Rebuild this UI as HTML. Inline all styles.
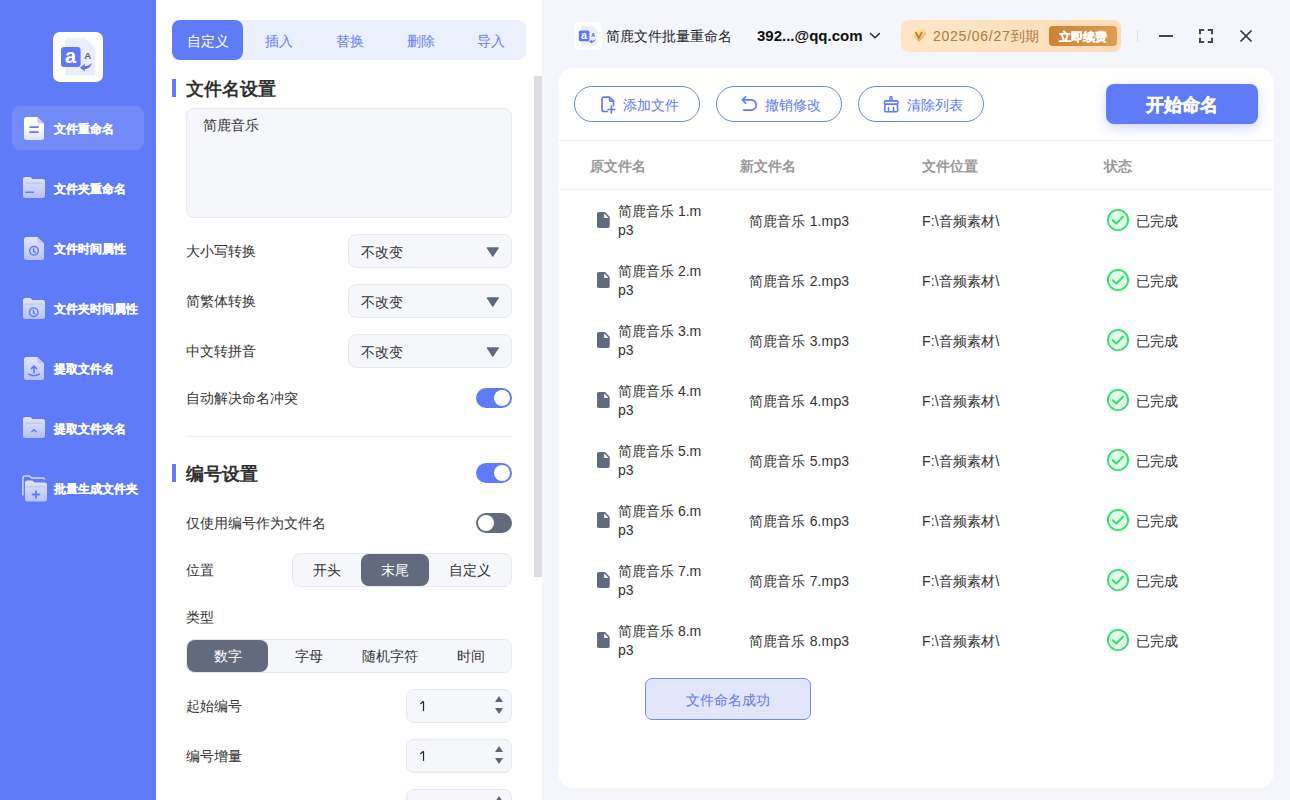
<!DOCTYPE html>
<html><head><meta charset="utf-8">
<style>
*{box-sizing:border-box;margin:0;padding:0}
html,body{width:1290px;height:800px;overflow:hidden}
body{position:relative;background:#f5f6fa;font-family:"Liberation Sans",sans-serif;color:#333;font-size:14px}
.a{position:absolute}
.t{position:absolute;white-space:nowrap;line-height:20px}
#side{left:0;top:0;width:156px;height:800px;background:#607bf8}
#panel{left:156px;top:0;width:386px;height:800px;background:#fff;overflow:hidden}
#right{left:542px;top:0;width:748px;height:800px;background:#f5f6fb}
.nav{position:absolute;left:12px;width:132px;height:44px;border-radius:8px}
.nav.on{background:rgba(255,255,255,.12)}
.nav .t{left:42px;top:12.5px;color:#fff;font-weight:bold;font-size:12px;-webkit-text-stroke:.2px #fff}
.nav svg{position:absolute;left:10px;top:9px}
.lbl{position:absolute;left:30px;white-space:nowrap;line-height:20px;font-size:14px;color:#333}
.sel{position:absolute;left:192px;width:164px;height:34px;background:#f6f7fb;border:1px solid #e8e9ef;border-radius:8px}
.sel .t{left:12px;top:7px;color:#333}
.sel .arr{position:absolute;left:138px;top:13px;width:0;height:0;border-left:6.5px solid transparent;border-right:6.5px solid transparent;border-top:10px solid #5f6474}
.tog{position:absolute;left:320px;width:36px;height:20px;border-radius:10px;background:#607bf8}
.tog::after{content:"";position:absolute;left:18px;top:2px;width:16px;height:16px;border-radius:50%;background:#fff}
.tog.off{background:#626a7d}
.tog.off::after{left:2px}
.hbar{position:absolute;left:16px;width:4px;height:18px;background:#607bf8}
.htxt{position:absolute;left:30px;white-space:nowrap;font-size:18px;font-weight:bold;color:#303030;line-height:24px}
.seg{position:absolute;height:34px;background:#f6f7fb;border:1px solid #e8e9ef;border-radius:8px;display:flex;padding:0}
.seg div{height:32px;line-height:32px;text-align:center;font-size:14px;color:#333;border-radius:8px;white-space:nowrap}
.seg div.on{background:#626a7d;color:#fff}
.num{position:absolute;left:250px;width:106px;height:34px;background:#f6f7fb;border:1px solid #e8e9ef;border-radius:8px}
.num .t{left:13px;top:6px;color:#333}
.num .up{position:absolute;left:88px;top:6px;width:0;height:0;border-left:4.5px solid transparent;border-right:4.5px solid transparent;border-bottom:6px solid #5f6474}
.num .dn{position:absolute;left:88px;top:18px;width:0;height:0;border-left:4.5px solid transparent;border-right:4.5px solid transparent;border-top:6px solid #5f6474}
.btn{position:absolute;top:18px;width:126px;height:36px;border:1px solid #6a80f7;border-radius:18px;background:#fff}
.btn .t{left:48px;top:8px;color:#6279f7}
.btn svg{position:absolute;left:25px;top:9px}
.hd{position:absolute;top:156px;font-weight:bold;color:#999;line-height:20px;white-space:nowrap}
.row{position:absolute;left:0;width:716px;height:60px}
.row .ic{position:absolute;left:39px;top:22px}
.row .n1{position:absolute;left:60px;top:12px;width:90px;line-height:19px;color:#333;white-space:normal;word-break:break-all}
.row .n2{position:absolute;left:191px;top:21px;color:#333;white-space:nowrap;line-height:20px;letter-spacing:.15px}
.row .loc{position:absolute;left:364px;top:21px;color:#333;white-space:nowrap;line-height:20px;letter-spacing:.15px}
.row .ck{position:absolute;left:549px;top:19px}
.row .st{position:absolute;left:578px;top:21px;color:#333;white-space:nowrap;line-height:20px}
</style></head><body>

<div id="side" class="a"><svg width="0" height="0" style="position:absolute"><defs><linearGradient id="gA" x1="0" y1="0" x2="0" y2="1"><stop offset="0" stop-color="#ffffff"/><stop offset="0.45" stop-color="#ffffff"/><stop offset="1" stop-color="#dbe1fd"/></linearGradient><linearGradient id="gI" x1="0" y1="0" x2="0" y2="1"><stop offset="0" stop-color="#e1e6fe"/><stop offset="1" stop-color="#b6c1fb"/></linearGradient></defs></svg>
  <div class="a" style="left:53px;top:32px;width:50px;height:50px;background:#fff;border-radius:7px"><svg width="50" height="50" viewBox="0 0 50 50"><path d="M14.6 6.3H31.9L42.3 16.1V40.9A2.5 2.5 0 0 1 39.8 43.4H14.6A2.5 2.5 0 0 1 12.1 40.9V8.8A2.5 2.5 0 0 1 14.6 6.3Z" fill="#e9effe"/><rect x="8" y="14.9" width="19.6" height="20.2" rx="3" fill="#6077f7"/><text x="17.6" y="30.6" text-anchor="middle" font-family="Liberation Sans" font-weight="bold" font-size="20" fill="#fff">a</text><text x="34.6" y="27" text-anchor="middle" font-family="Liberation Sans" font-weight="bold" font-size="9.6" fill="#5b6270">A</text><path d="M27 35.7L31.9 31.6L31.7 34.1C34.7 34.1 37.1 33.1 38.9 30.7C38.4 34.5 35.5 36.8 31.7 37.1L31.9 39.6Z" fill="#6077f7"/></svg></div>
  <div class="nav on" style="top:106px"><svg width="27" height="27" viewBox="0 0 27 27"><path d="M4.5 2H15.3L22 8.5V22.5A2.5 2.5 0 0 1 19.5 25H4.5A2.5 2.5 0 0 1 2 22.5V4.5A2.5 2.5 0 0 1 4.5 2Z" fill="url(#gA)"/><path d="M15.3 2V6.3A2.2 2.2 0 0 0 17.5 8.5H22Z" fill="#c3cbfb"/><rect x="7.2" y="11.2" width="9.8" height="1.8" rx=".9" fill="#607bf8"/><rect x="7.2" y="16.2" width="9.8" height="1.8" rx=".9" fill="#607bf8"/></svg><div class="t">文件重命名</div></div>
  <div class="nav" style="top:166px"><svg width="27" height="27" viewBox="0 0 27 27"><g transform="translate(0 0)"><path d="M3.5 2H8.3L10.6 4H20.5A2.5 2.5 0 0 1 23 6.5V20.5A2.5 2.5 0 0 1 20.5 23H3.5A2.5 2.5 0 0 1 1 20.5V4.5A2.5 2.5 0 0 1 3.5 2Z" fill="url(#gI)"/><path d="M4.5 7.3H19.5A1.5 1.5 0 0 1 21 8.8V9H3V8.8A1.5 1.5 0 0 1 4.5 7.3Z" fill="#bcc6fc" opacity=".8"/></g><rect x="3" y="16.5" width="9" height="1.6" rx=".8" fill="#607bf8"/></svg><div class="t">文件夹重命名</div></div>
  <div class="nav" style="top:226px"><svg width="27" height="27" viewBox="0 0 27 27"><path d="M4.5 2H15.3L22 8.5V22.5A2.5 2.5 0 0 1 19.5 25H4.5A2.5 2.5 0 0 1 2 22.5V4.5A2.5 2.5 0 0 1 4.5 2Z" fill="url(#gI)"/><path d="M15.3 2V6.3A2.2 2.2 0 0 0 17.5 8.5H22Z" fill="#c3cbfb"/><circle cx="12" cy="15.8" r="4.3" fill="none" stroke="#607bf8" stroke-width="1.4"/><path d="M11.6 13.6V16.2L13.4 17.6" fill="none" stroke="#607bf8" stroke-width="1.3" stroke-linecap="round"/></svg><div class="t">文件时间属性</div></div>
  <div class="nav" style="top:286px"><svg width="27" height="27" viewBox="0 0 27 27"><g transform="translate(0 1)"><path d="M3.5 2H8.3L10.6 4H20.5A2.5 2.5 0 0 1 23 6.5V20.5A2.5 2.5 0 0 1 20.5 23H3.5A2.5 2.5 0 0 1 1 20.5V4.5A2.5 2.5 0 0 1 3.5 2Z" fill="url(#gI)"/><path d="M4.5 7.3H19.5A1.5 1.5 0 0 1 21 8.8V9H3V8.8A1.5 1.5 0 0 1 4.5 7.3Z" fill="#bcc6fc" opacity=".8"/></g><circle cx="11.75" cy="17.2" r="4.3" fill="none" stroke="#607bf8" stroke-width="1.4"/><path d="M11.4 15V17.6L13.1 19" fill="none" stroke="#607bf8" stroke-width="1.3" stroke-linecap="round"/></svg><div class="t">文件夹时间属性</div></div>
  <div class="nav" style="top:346px"><svg width="27" height="27" viewBox="0 0 27 27"><path d="M4.5 2H15.3L22 8.5V22.5A2.5 2.5 0 0 1 19.5 25H4.5A2.5 2.5 0 0 1 2 22.5V4.5A2.5 2.5 0 0 1 4.5 2Z" fill="url(#gI)"/><path d="M15.3 2V6.3A2.2 2.2 0 0 0 17.5 8.5H22Z" fill="#c3cbfb"/><path d="M12 18V11.2M9.4 13.6L12 11L14.6 13.6" fill="none" stroke="#607bf8" stroke-width="1.5" stroke-linecap="round" stroke-linejoin="round"/><path d="M6.5 19.2Q12 22.4 17.5 19.2" fill="none" stroke="#607bf8" stroke-width="1.5" stroke-linecap="round"/></svg><div class="t">提取文件名</div></div>
  <div class="nav" style="top:406px"><svg width="27" height="27" viewBox="0 0 27 27"><g transform="translate(0 0)"><path d="M3.5 2H8.3L10.6 4H20.5A2.5 2.5 0 0 1 23 6.5V20.5A2.5 2.5 0 0 1 20.5 23H3.5A2.5 2.5 0 0 1 1 20.5V4.5A2.5 2.5 0 0 1 3.5 2Z" fill="url(#gI)"/><path d="M4.5 7.3H19.5A1.5 1.5 0 0 1 21 8.8V9H3V8.8A1.5 1.5 0 0 1 4.5 7.3Z" fill="#bcc6fc" opacity=".8"/></g><path d="M9.8 16.8L12 14.8L14.2 16.8" fill="none" stroke="#607bf8" stroke-width="1.5" stroke-linecap="round" stroke-linejoin="round"/></svg><div class="t">提取文件夹名</div></div>
  <div class="nav" style="top:466px"><svg width="27" height="27" viewBox="0 0 27 27"><path d="M2.7 1H7.5L9.8 3H20.9A1.6 1.6 0 0 1 22.5 4.6" fill="none" stroke="#d5dbfd" stroke-width="1.4"/><path d="M2.7 1A2 2 0 0 0 0.9 3V20.5" fill="none" stroke="#d5dbfd" stroke-width="1.4"/><g transform="translate(2 3.5)"><g transform="translate(0 0)"><path d="M3.5 2H8.3L10.6 4H20.5A2.5 2.5 0 0 1 23 6.5V20.5A2.5 2.5 0 0 1 20.5 23H3.5A2.5 2.5 0 0 1 1 20.5V4.5A2.5 2.5 0 0 1 3.5 2Z" fill="url(#gI)"/><path d="M4.5 7.3H19.5A1.5 1.5 0 0 1 21 8.8V9H3V8.8A1.5 1.5 0 0 1 4.5 7.3Z" fill="#bcc6fc" opacity=".8"/></g></g><path d="M13.9 16.2V22.8M10.6 19.5H17.2" stroke="#607bf8" stroke-width="1.8" stroke-linecap="round"/></svg><div class="t">批量生成文件夹</div></div>
</div>

<div id="panel" class="a">
  <div class="a" style="left:16px;top:20px;width:354px;height:40px;background:#ebf0fe;border-radius:8px"></div>
  <div class="a" style="left:16px;top:20px;width:71px;height:40px;background:#607bf8;border-radius:8px"></div>
  <div class="t" style="left:16px;top:31px;width:71px;text-align:center;color:#fff">自定义</div>
  <div class="t" style="left:87px;top:31px;width:71px;text-align:center;color:#6a7ff5">插入</div>
  <div class="t" style="left:158px;top:31px;width:71px;text-align:center;color:#6a7ff5">替换</div>
  <div class="t" style="left:229px;top:31px;width:71px;text-align:center;color:#6a7ff5">删除</div>
  <div class="t" style="left:299px;top:31px;width:71px;text-align:center;color:#6a7ff5">导入</div>

  <div class="hbar" style="top:79px"></div>
  <div class="htxt" style="top:77px">文件名设置</div>
  <div class="a" style="left:30px;top:108px;width:326px;height:110px;background:#f6f7fb;border:1px solid #e8e9ef;border-radius:8px"></div>
  <div class="t" style="left:47px;top:115px">简鹿音乐</div>

  <div class="lbl" style="top:241px">大小写转换</div>
  <div class="sel" style="top:234px"><div class="t">不改变</div><svg class="a" style="left:137px;top:12px" width="14" height="11" viewBox="0 0 14 11"><path d="M1.4 0.2H12.2Q13.2 0.3 12.7 1.2L7.3 9.4Q6.75 10.2 6.2 9.4L0.9 1.2Q0.4 0.3 1.4 0.2Z" fill="#616a7d"/></svg></div>
  <div class="lbl" style="top:291px">简繁体转换</div>
  <div class="sel" style="top:284px"><div class="t">不改变</div><svg class="a" style="left:137px;top:12px" width="14" height="11" viewBox="0 0 14 11"><path d="M1.4 0.2H12.2Q13.2 0.3 12.7 1.2L7.3 9.4Q6.75 10.2 6.2 9.4L0.9 1.2Q0.4 0.3 1.4 0.2Z" fill="#616a7d"/></svg></div>
  <div class="lbl" style="top:341px">中文转拼音</div>
  <div class="sel" style="top:334px"><div class="t">不改变</div><svg class="a" style="left:137px;top:12px" width="14" height="11" viewBox="0 0 14 11"><path d="M1.4 0.2H12.2Q13.2 0.3 12.7 1.2L7.3 9.4Q6.75 10.2 6.2 9.4L0.9 1.2Q0.4 0.3 1.4 0.2Z" fill="#616a7d"/></svg></div>
  <div class="lbl" style="top:388px">自动解决命名冲突</div>
  <div class="tog" style="top:388px"></div>
  <div class="a" style="left:30px;top:436px;width:326px;height:1px;background:#eceef3"></div>

  <div class="hbar" style="top:464px"></div>
  <div class="htxt" style="top:462px">编号设置</div>
  <div class="tog" style="top:463px"></div>
  <div class="lbl" style="top:513px">仅使用编号作为文件名</div>
  <div class="tog off" style="top:513px"></div>
  <div class="lbl" style="top:560px">位置</div>
  <div class="seg" style="left:136px;top:553px;width:220px">
    <div style="width:68px">开头</div><div class="on" style="width:68px">末尾</div><div style="width:82px">自定义</div>
  </div>
  <div class="lbl" style="top:607px">类型</div>
  <div class="seg" style="left:30px;top:639px;width:326px">
    <div class="on" style="width:81px">数字</div><div style="width:81px">字母</div><div style="width:81px">随机字符</div><div style="width:81px">时间</div>
  </div>
  <div class="lbl" style="top:696px">起始编号</div>
  <div class="num" style="top:689px"><svg class="a" style="left:12px;top:10px" width="8" height="13" viewBox="0 0 8 13"><path d="M4.5 1.2V11M4.5 1.2L1.3 3.9" fill="none" stroke="#2a2a2a" stroke-width="1.25"/></svg><div class="up"></div><div class="dn"></div></div>
  <div class="lbl" style="top:746px">编号增量</div>
  <div class="num" style="top:739px"><svg class="a" style="left:12px;top:10px" width="8" height="13" viewBox="0 0 8 13"><path d="M4.5 1.2V11M4.5 1.2L1.3 3.9" fill="none" stroke="#2a2a2a" stroke-width="1.25"/></svg><div class="up"></div><div class="dn"></div></div>
  <div class="num" style="top:789px"><div class="up"></div></div>

  <div class="a" style="left:378px;top:76px;width:8px;height:501px;background:#dcdde5"></div>
</div>

<div id="right" class="a">
  <div class="a" style="left:32px;top:22px;width:28px;height:28px;background:#fff;border-radius:5px"><svg width="28" height="28" viewBox="0 0 28 28"><g transform="translate(0.5 0.4) scale(0.54)"><path d="M14.6 6.3H31.9L42.3 16.1V40.9A2.5 2.5 0 0 1 39.8 43.4H14.6A2.5 2.5 0 0 1 12.1 40.9V8.8A2.5 2.5 0 0 1 14.6 6.3Z" fill="#e9effe"/><rect x="8" y="14.9" width="19.6" height="20.2" rx="3" fill="#6077f7"/><text x="17.6" y="30.6" text-anchor="middle" font-family="Liberation Sans" font-weight="bold" font-size="20" fill="#fff">a</text><text x="34.6" y="27" text-anchor="middle" font-family="Liberation Sans" font-weight="bold" font-size="9.6" fill="#5b6270">A</text><path d="M27 35.7L31.9 31.6L31.7 34.1C34.7 34.1 37.1 33.1 38.9 30.7C38.4 34.5 35.5 36.8 31.7 37.1L31.9 39.6Z" fill="#6077f7"/></g></svg></div>
  <div class="t" style="left:64px;top:26px;color:#1f1f1f">简鹿文件批量重命名</div>
  <div class="t" style="left:215px;top:26px;color:#111;font-weight:bold;font-size:15px">392...@qq.com</div>
  <div class="a" style="left:359px;top:20px;width:220px;height:32px;border-radius:8px;background:linear-gradient(90deg,#fde6c8,#fddcb6)"></div>
  <div class="t" style="left:391px;top:26px;color:#a97a40;letter-spacing:.75px">2025/06/27到期</div>
  <div class="a" style="left:507px;top:26px;width:68px;height:20px;border-radius:4px;background:linear-gradient(90deg,#cc8333,#de9c55)"></div>
  <div class="t" style="left:507px;top:27px;width:68px;text-align:center;color:#fff;font-weight:bold;font-size:12px;-webkit-text-stroke:.3px #fff">立即续费</div>
  <div class="a" style="left:595px;top:30px;width:1px;height:12px;background:#dcdde3"></div>
  <div class="a" style="left:617px;top:35px;width:14px;height:2px;background:#444"></div><svg class="a" style="left:326px;top:31px" width="12" height="9" viewBox="0 0 12 9"><path d="M2.5 2.5L7 6.8L11.5 2.5" fill="none" stroke="#2a2a2a" stroke-width="1.5" stroke-linecap="round" stroke-linejoin="round"/></svg><svg class="a" style="left:367px;top:27px" width="18" height="17" viewBox="0 0 18 17"><defs><linearGradient id="dg" x1="0" y1="0" x2="0.6" y2="1"><stop offset="0" stop-color="#fff6d8"/><stop offset=".5" stop-color="#fbd88e"/><stop offset="1" stop-color="#f4a73f"/></linearGradient></defs><path d="M4.5 1.3H14.9L17.3 6.7L10 15L1.7 6.7Z" fill="url(#dg)"/><path d="M6.8 5.5L9.8 11L12.6 5.5" fill="none" stroke="#b57a35" stroke-width="1.6" stroke-linecap="round"/></svg><svg class="a" style="left:657px;top:29px" width="14" height="14" viewBox="0 0 14 14"><path d="M1 5.2V1H5.2M8.8 1H13V5.2M13 8.8V13H8.8M5.2 13H1V8.8" fill="none" stroke="#474747" stroke-width="2"/></svg><svg class="a" style="left:697px;top:29px" width="14" height="14" viewBox="0 0 14 14"><path d="M1.5 1.5L12.5 12.5M12.5 1.5L1.5 12.5" stroke="#333" stroke-width="1.7"/></svg>

  <div class="a" style="left:16px;top:68px;width:716px;height:720px;background:#fff;border-radius:16px">
    <div class="btn" style="left:16px"><svg style="left:23px;top:6px" width="20" height="22" viewBox="0 0 20 22"><path d="M9.3 18.5H6A2 2 0 0 1 4 16.5V6.2A2 2 0 0 1 6 4.2H11.5L15.5 8.2V12.6" fill="none" stroke="#6279f7" stroke-width="1.7" stroke-linejoin="round" stroke-linecap="round"/><path d="M11.5 4.4V7A1.2 1.2 0 0 0 12.7 8.2H15.3" fill="none" stroke="#6279f7" stroke-width="1.5"/><path d="M13.4 13.2V19.8M10.1 16.5H16.7" stroke="#6279f7" stroke-width="1.7" stroke-linecap="round"/></svg><div class="t">添加文件</div></div>
    <div class="btn" style="left:158px"><svg style="left:21px;top:6px" width="22" height="22" viewBox="0 0 22 22"><path d="M7.6 3.8L4.3 6.9L7.6 10.2M4.5 6.9H13.1A5.15 5.15 0 0 1 13.1 17.2H5.8" fill="none" stroke="#6279f7" stroke-width="1.7" stroke-linecap="round" stroke-linejoin="round"/></svg><div class="t">撤销修改</div></div>
    <div class="btn" style="left:300px"><svg style="left:21px;top:6px" width="22" height="22" viewBox="0 0 22 22"><path d="M10 7.1V4.6A1 1 0 0 1 11 3.6A1 1 0 0 1 12 4.6V7.1" fill="none" stroke="#6279f7" stroke-width="1.5"/><rect x="4.4" y="7.9" width="13.6" height="3.2" rx="1.4" fill="none" stroke="#6279f7" stroke-width="1.6"/><path d="M5 11.2L4.7 17.2A1.6 1.6 0 0 0 6.3 18.8H16.1A1.6 1.6 0 0 0 17.7 17.2L17.4 11.2" fill="none" stroke="#6279f7" stroke-width="1.6"/><path d="M8.5 14.4V18.6M13.6 14.4V18.6" stroke="#6279f7" stroke-width="1.5" stroke-linecap="round"/></svg><div class="t">清除列表</div></div>
    <div class="a" style="left:548px;top:16px;width:152px;height:40px;border-radius:8px;background:#607bf8;box-shadow:0 4px 12px rgba(96,123,248,.3)"></div>
    <div class="t" style="left:548px;top:27px;width:152px;text-align:center;color:#fff;font-weight:bold;font-size:18px;-webkit-text-stroke:.4px #fff">开始命名</div>
    <div class="a" style="left:0;top:72px;width:716px;height:1px;background:#f0f1f4"></div>
    <div class="hd" style="left:32px;top:88px">原文件名</div>
    <div class="hd" style="left:182px;top:88px">新文件名</div>
    <div class="hd" style="left:364px;top:88px">文件位置</div>
    <div class="hd" style="left:546px;top:88px">状态</div>
    <div class="a" style="left:0;top:121px;width:716px;height:1px;background:#f0f1f4"></div>
    <div id="rows"><div class="row" style="top:122px"><svg class="ic" width="13" height="16" viewBox="0 0 13 16"><path d="M1.8 0H8L12.7 4.8V14.2A1.8 1.8 0 0 1 10.9 16H1.8A1.8 1.8 0 0 1 0 14.2V1.8A1.8 1.8 0 0 1 1.8 0Z" fill="#626a7e"/><path d="M7.2 1.4V6H11.6Z" fill="#fff"/></svg><div class="n1">简鹿音乐 1.mp3</div><div class="n2">简鹿音乐 1.mp3</div><div class="loc">F:\音频素材\</div><svg class="ck" width="22" height="22" viewBox="0 0 22 22"><circle cx="11" cy="11" r="10.1" fill="#e2fbe8" stroke="#2fe06c" stroke-width="1.8"/><path d="M5.8 11.2L9.3 14.6L16 7.8" fill="none" stroke="#2fe06c" stroke-width="2" stroke-linecap="round" stroke-linejoin="round"/></svg><div class="st">已完成</div></div>
<div class="row" style="top:182px"><svg class="ic" width="13" height="16" viewBox="0 0 13 16"><path d="M1.8 0H8L12.7 4.8V14.2A1.8 1.8 0 0 1 10.9 16H1.8A1.8 1.8 0 0 1 0 14.2V1.8A1.8 1.8 0 0 1 1.8 0Z" fill="#626a7e"/><path d="M7.2 1.4V6H11.6Z" fill="#fff"/></svg><div class="n1">简鹿音乐 2.mp3</div><div class="n2">简鹿音乐 2.mp3</div><div class="loc">F:\音频素材\</div><svg class="ck" width="22" height="22" viewBox="0 0 22 22"><circle cx="11" cy="11" r="10.1" fill="#e2fbe8" stroke="#2fe06c" stroke-width="1.8"/><path d="M5.8 11.2L9.3 14.6L16 7.8" fill="none" stroke="#2fe06c" stroke-width="2" stroke-linecap="round" stroke-linejoin="round"/></svg><div class="st">已完成</div></div>
<div class="row" style="top:242px"><svg class="ic" width="13" height="16" viewBox="0 0 13 16"><path d="M1.8 0H8L12.7 4.8V14.2A1.8 1.8 0 0 1 10.9 16H1.8A1.8 1.8 0 0 1 0 14.2V1.8A1.8 1.8 0 0 1 1.8 0Z" fill="#626a7e"/><path d="M7.2 1.4V6H11.6Z" fill="#fff"/></svg><div class="n1">简鹿音乐 3.mp3</div><div class="n2">简鹿音乐 3.mp3</div><div class="loc">F:\音频素材\</div><svg class="ck" width="22" height="22" viewBox="0 0 22 22"><circle cx="11" cy="11" r="10.1" fill="#e2fbe8" stroke="#2fe06c" stroke-width="1.8"/><path d="M5.8 11.2L9.3 14.6L16 7.8" fill="none" stroke="#2fe06c" stroke-width="2" stroke-linecap="round" stroke-linejoin="round"/></svg><div class="st">已完成</div></div>
<div class="row" style="top:302px"><svg class="ic" width="13" height="16" viewBox="0 0 13 16"><path d="M1.8 0H8L12.7 4.8V14.2A1.8 1.8 0 0 1 10.9 16H1.8A1.8 1.8 0 0 1 0 14.2V1.8A1.8 1.8 0 0 1 1.8 0Z" fill="#626a7e"/><path d="M7.2 1.4V6H11.6Z" fill="#fff"/></svg><div class="n1">简鹿音乐 4.mp3</div><div class="n2">简鹿音乐 4.mp3</div><div class="loc">F:\音频素材\</div><svg class="ck" width="22" height="22" viewBox="0 0 22 22"><circle cx="11" cy="11" r="10.1" fill="#e2fbe8" stroke="#2fe06c" stroke-width="1.8"/><path d="M5.8 11.2L9.3 14.6L16 7.8" fill="none" stroke="#2fe06c" stroke-width="2" stroke-linecap="round" stroke-linejoin="round"/></svg><div class="st">已完成</div></div>
<div class="row" style="top:362px"><svg class="ic" width="13" height="16" viewBox="0 0 13 16"><path d="M1.8 0H8L12.7 4.8V14.2A1.8 1.8 0 0 1 10.9 16H1.8A1.8 1.8 0 0 1 0 14.2V1.8A1.8 1.8 0 0 1 1.8 0Z" fill="#626a7e"/><path d="M7.2 1.4V6H11.6Z" fill="#fff"/></svg><div class="n1">简鹿音乐 5.mp3</div><div class="n2">简鹿音乐 5.mp3</div><div class="loc">F:\音频素材\</div><svg class="ck" width="22" height="22" viewBox="0 0 22 22"><circle cx="11" cy="11" r="10.1" fill="#e2fbe8" stroke="#2fe06c" stroke-width="1.8"/><path d="M5.8 11.2L9.3 14.6L16 7.8" fill="none" stroke="#2fe06c" stroke-width="2" stroke-linecap="round" stroke-linejoin="round"/></svg><div class="st">已完成</div></div>
<div class="row" style="top:422px"><svg class="ic" width="13" height="16" viewBox="0 0 13 16"><path d="M1.8 0H8L12.7 4.8V14.2A1.8 1.8 0 0 1 10.9 16H1.8A1.8 1.8 0 0 1 0 14.2V1.8A1.8 1.8 0 0 1 1.8 0Z" fill="#626a7e"/><path d="M7.2 1.4V6H11.6Z" fill="#fff"/></svg><div class="n1">简鹿音乐 6.mp3</div><div class="n2">简鹿音乐 6.mp3</div><div class="loc">F:\音频素材\</div><svg class="ck" width="22" height="22" viewBox="0 0 22 22"><circle cx="11" cy="11" r="10.1" fill="#e2fbe8" stroke="#2fe06c" stroke-width="1.8"/><path d="M5.8 11.2L9.3 14.6L16 7.8" fill="none" stroke="#2fe06c" stroke-width="2" stroke-linecap="round" stroke-linejoin="round"/></svg><div class="st">已完成</div></div>
<div class="row" style="top:482px"><svg class="ic" width="13" height="16" viewBox="0 0 13 16"><path d="M1.8 0H8L12.7 4.8V14.2A1.8 1.8 0 0 1 10.9 16H1.8A1.8 1.8 0 0 1 0 14.2V1.8A1.8 1.8 0 0 1 1.8 0Z" fill="#626a7e"/><path d="M7.2 1.4V6H11.6Z" fill="#fff"/></svg><div class="n1">简鹿音乐 7.mp3</div><div class="n2">简鹿音乐 7.mp3</div><div class="loc">F:\音频素材\</div><svg class="ck" width="22" height="22" viewBox="0 0 22 22"><circle cx="11" cy="11" r="10.1" fill="#e2fbe8" stroke="#2fe06c" stroke-width="1.8"/><path d="M5.8 11.2L9.3 14.6L16 7.8" fill="none" stroke="#2fe06c" stroke-width="2" stroke-linecap="round" stroke-linejoin="round"/></svg><div class="st">已完成</div></div>
<div class="row" style="top:542px"><svg class="ic" width="13" height="16" viewBox="0 0 13 16"><path d="M1.8 0H8L12.7 4.8V14.2A1.8 1.8 0 0 1 10.9 16H1.8A1.8 1.8 0 0 1 0 14.2V1.8A1.8 1.8 0 0 1 1.8 0Z" fill="#626a7e"/><path d="M7.2 1.4V6H11.6Z" fill="#fff"/></svg><div class="n1">简鹿音乐 8.mp3</div><div class="n2">简鹿音乐 8.mp3</div><div class="loc">F:\音频素材\</div><svg class="ck" width="22" height="22" viewBox="0 0 22 22"><circle cx="11" cy="11" r="10.1" fill="#e2fbe8" stroke="#2fe06c" stroke-width="1.8"/><path d="M5.8 11.2L9.3 14.6L16 7.8" fill="none" stroke="#2fe06c" stroke-width="2" stroke-linecap="round" stroke-linejoin="round"/></svg><div class="st">已完成</div></div></div><!--/rows-->
    <div class="a" style="left:87px;top:610px;width:166px;height:42px;border:1px solid #7088f8;background:#e1e6fd;border-radius:7px"></div>
    <div class="t" style="left:87px;top:622px;width:166px;text-align:center;color:#6279f7">文件命名成功</div>
  </div>
</div>
</body></html>
